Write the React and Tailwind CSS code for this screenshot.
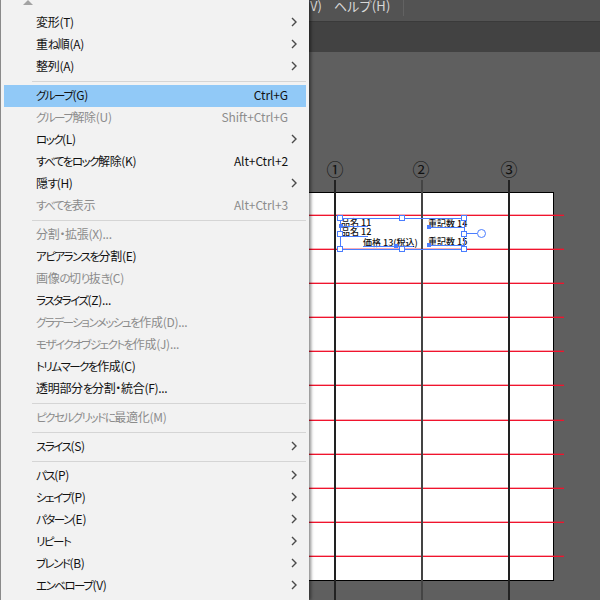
import React from 'react'

const FONT = "font-['Noto_Sans_CJK_JP','Noto_Sans',sans-serif] [font-feature-settings:'palt']"

// Menu groups, a separator is drawn between each of them
const MENU_GROUPS = [
  [
    { label: '変形(T)', arrow: true },
    { label: '重ね順(A)', arrow: true },
    { label: '整列(A)', arrow: true },
  ],
  [
    { label: 'グループ(G)', shortcut: 'Ctrl+G', active: true },
    { label: 'グループ解除(U)', shortcut: 'Shift+Ctrl+G', disabled: true },
    { label: 'ロック(L)', arrow: true },
    { label: 'すべてをロック解除(K)', shortcut: 'Alt+Ctrl+2' },
    { label: '隠す(H)', arrow: true },
    { label: 'すべてを表示', shortcut: 'Alt+Ctrl+3', disabled: true },
  ],
  [
    { label: '分割・拡張(X)...', disabled: true },
    { label: 'アピアランスを分割(E)' },
    { label: '画像の切り抜き(C)', disabled: true },
    { label: 'ラスタライズ(Z)...' },
    { label: 'グラデーションメッシュを作成(D)...', disabled: true },
    { label: 'モザイクオブジェクトを作成(J)...', disabled: true },
    { label: 'トリムマークを作成(C)' },
    { label: '透明部分を分割・統合(F)...' },
  ],
  [{ label: 'ピクセルグリッドに最適化(M)', disabled: true }],
  [{ label: 'スライス(S)', arrow: true }],
  [
    { label: 'パス(P)', arrow: true },
    { label: 'シェイプ(P)', arrow: true },
    { label: 'パターン(E)', arrow: true },
    { label: 'リピート', arrow: true },
    { label: 'ブレンド(B)', arrow: true },
    { label: 'エンベロープ(V)', arrow: true },
  ],
]

const RED_LINES = Array.from({ length: 11 }, (_, i) => i)

// Text frames of the selection, placed on the artboard
const TEXT_LINES = [
  { text: '品名 11', label: 'left-[341px] top-[165px]', line: 'left-[340px] top-[174px] w-[28px]', dot: 'left-[339px] top-[172px]' },
  { text: '品名 12', label: 'left-[341px] top-[174px]', line: 'left-[340px] top-[184px] w-[28px]' },
  { text: '価格 13(税込)', label: 'left-[363px] top-[185px]', line: 'left-[363px] top-[194px] w-[50px]', dot: 'left-[394px] top-[192px]' },
  { text: '重記数 14', label: 'left-[428px] top-[166px]', line: 'left-[427px] top-[175px] w-[37px]', dot: 'left-[427px] top-[173px]' },
  { text: '重記数 15', label: 'left-[428px] top-[184px]', line: 'left-[427px] top-[193px] w-[37px]', dot: 'left-[427px] top-[191px]' },
]

const MenuLabel = ({ text }) => (
  <span className="whitespace-nowrap">
    {text.split(/([ぁ-ゖァ-ヶー]+)/).map((part, i) =>
      i % 2 === 1
        ? <span key={i} className="text-[11.5px] tracking-[-1.5px]">{part}</span>
        : <span key={i} className="tracking-[-0.3px]">{part}</span>
    )}
  </span>
)

const Chevron = () => (
  <svg width="8" height="10" viewBox="0 0 8 10" className="ml-auto mr-[8px]">
    <path d="M2 1 L6 5 L2 9" fill="none" stroke="#4a4a4a" strokeWidth="1.4" />
  </svg>
)

const MenuRow = ({ item }) => (
  <div className={`h-[22px] flex items-center justify-between pl-8 pb-[2px] text-xs leading-[18px] ${item.active ? 'bg-[#91c9f7]' : ''} ${item.disabled ? 'text-[#8c8c8c]' : 'text-[#111111]'}`}>
    <MenuLabel text={item.label} />
    {item.shortcut && <span className="mr-[18px] -tracking-[0.1px]">{item.shortcut}</span>}
    {item.arrow && <Chevron />}
  </div>
)

const Menu = () => (
  <div className="absolute left-0 top-0 w-[309px] h-[600px] bg-[#f2f2f2] border-l border-[#8a8a8a] shadow-[2px_0_3px_rgba(0,0,0,0.45)] pt-3 pl-[3px] pr-[3px] overflow-hidden">
    <div className="absolute left-[22px] top-0 w-0 h-0 border-x-[5px] border-x-transparent border-b-[5px] border-b-[#a3a3a3]" />
    {MENU_GROUPS.map((group, i) => (
      <div key={i}>
        {i > 0 && (
          <div className="h-[7px] flex items-center pl-7">
            <div className="h-px w-full bg-[#d5d5d5]" />
          </div>
        )}
        {group.map(item => <MenuRow key={item.label} item={item} />)}
      </div>
    ))}
  </div>
)

const Handle = () => <div className="w-[6px] h-[6px] bg-white border border-[#4a7dff]" />

const Canvas = () => (
  <div className="relative flex-1 bg-[#5f5f5f]">
    {/* Artboard */}
    <div className="absolute left-[280px] top-[140px] w-[274px] h-[389px] bg-white border border-black" />

    {/* Red rows */}
    <div className="absolute left-[300px] top-[163px] w-[264px] h-[342px] flex flex-col justify-between">
      {RED_LINES.map(i => (
        <div key={i} className="h-px bg-[#f0142d] shadow-[0_-1px_0_rgba(240,20,45,0.35)]" />
      ))}
    </div>

    {/* Column guides and numbers */}
    <div className="absolute left-[334px] top-[128px] w-[2px] h-[420px] bg-[#222222]" />
    <div className="absolute left-[421px] top-[128px] w-[2px] h-[420px] bg-[#444444]" />
    <div className="absolute left-[508px] top-[128px] w-[2px] h-[420px] bg-[#222222]" />
    <span className="absolute left-[325px] top-[105px] w-5 text-center text-[17px] leading-[24px] text-[#111111]">①</span>
    <span className="absolute left-[411px] top-[105px] w-5 text-center text-[17px] leading-[24px] text-[#111111]">②</span>
    <span className="absolute left-[499px] top-[105px] w-5 text-center text-[17px] leading-[24px] text-[#111111]">③</span>

    {/* Selected text */}
    {TEXT_LINES.map(t => (
      <React.Fragment key={t.text}>
        <span className={`absolute ${t.label} text-[9px] leading-[12px] font-medium text-[#111111] whitespace-nowrap`}>{t.text}</span>
        <div className={`absolute ${t.line} h-px bg-[#4a7dff]`} />
        {t.dot && <div className={`absolute ${t.dot} w-[4px] h-[4px] bg-[#4a7dff]`} />}
      </React.Fragment>
    ))}

    {/* Selection box with its handles */}
    <div className="absolute left-[340px] top-[166px] w-[125px] h-[32px] border border-[#4a7dff]" />
    <div className="absolute left-[337px] top-[163px] w-[130px] h-[37px] flex flex-col justify-between">
      <div className="flex justify-between"><Handle /><Handle /><Handle /></div>
      <div className="flex justify-between"><Handle /><Handle /></div>
      <div className="flex justify-between"><Handle /><Handle /><Handle /></div>
    </div>
    <div className="absolute left-[467px] top-[177px] flex items-center">
      <div className="w-[10px] h-px bg-[#4a7dff]" />
      <div className="w-[9px] h-[9px] rounded-full bg-white border border-[#4a7dff]" />
    </div>
  </div>
)

const App = () => {
  return (
    <div className={`relative w-[600px] h-[600px] overflow-hidden flex flex-col ${FONT}`}>
      {/* Menu bar */}
      <div className="h-[22px] bg-[#535353] border-b border-[#3a3a3a] flex items-start pl-[310px] text-[13px] leading-[12px] text-[#d8d8d8]">
        <span>V)</span>
        <span className="ml-[12px] tracking-[0.2px]">ヘルプ(H)</span>
        <div className="ml-[12px] w-px h-4 bg-[#626262]" />
      </div>
      {/* Control bar */}
      <div className="h-[30px] bg-[#424242]" />
      <Canvas />
      <Menu />
    </div>
  )
}

export default App
